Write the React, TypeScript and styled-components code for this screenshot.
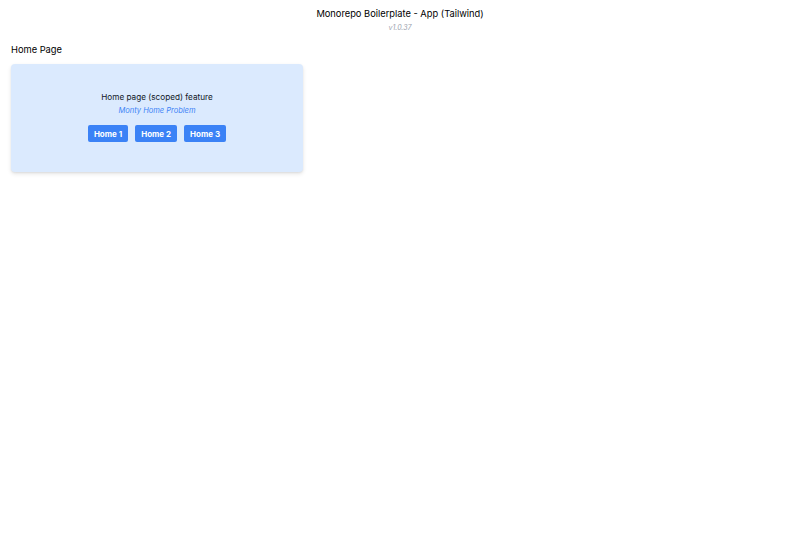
import React from 'react';
import styled, { createGlobalStyle } from 'styled-components';

const GlobalStyle = createGlobalStyle`
  html, body {
    margin: 0;
    padding: 0;
    background: #ffffff;
    font-family: Inter, 'Noto Sans', 'Liberation Sans', sans-serif;
    color: #000000;
  }
`;

const Header = styled.header`
  display: flex;
  flex-direction: column;
  align-items: center;
  padding-top: 7px;
`;

const Title = styled.h1`
  margin: 0;
  font-size: 9.3px;
  font-weight: 400;
  line-height: 14px;
`;

const Version = styled.span`
  margin-top: 2px;
  font-size: 7px;
  font-style: italic;
  color: #9ca3af;
  line-height: 10px;
`;

const Main = styled.main`
  padding: 10px 11px;
`;

const PageTitle = styled.h2`
  margin: 0 0 7px;
  font-size: 9.3px;
  font-weight: 400;
  line-height: 14px;
`;

const Card = styled.section`
  width: 292px;
  height: 108px;
  box-sizing: border-box;
  background: #dbeafe;
  border-radius: 4px;
  box-shadow: 0 2px 4px rgba(0, 0, 0, 0.1), 0 1px 2px rgba(0, 0, 0, 0.06);
  display: flex;
  flex-direction: column;
  align-items: center;
  padding-top: 27px;
`;

const FeatureTitle = styled.p`
  margin: 0;
  font-size: 8.2px;
  line-height: 13px;
  color: #111827;
`;

const Subtitle = styled.p`
  margin: 1px 0 0;
  font-size: 7.5px;
  line-height: 12px;
  font-style: italic;
  color: #3b82f6;
`;

const ButtonRow = styled.div`
  display: flex;
  gap: 7px;
  margin-top: 8px;
`;

const Button = styled.button`
  border: none;
  background: #3b82f6;
  color: #ffffff;
  font-family: inherit;
  font-size: 8px;
  font-weight: 700;
  height: 17px;
  padding: 0 6px;
  border-radius: 2px;
  cursor: pointer;
`;

export default function App() {
  return (
    <>
      <GlobalStyle />
      <Header>
        <Title>Monorepo Boilerplate - App (Tailwind)</Title>
        <Version>v1.0.37</Version>
      </Header>
      <Main>
        <PageTitle>Home Page</PageTitle>
        <Card>
          <FeatureTitle>Home page (scoped) feature</FeatureTitle>
          <Subtitle>Monty Home Problem</Subtitle>
          <ButtonRow>
            <Button>Home 1</Button>
            <Button>Home 2</Button>
            <Button>Home 3</Button>
          </ButtonRow>
        </Card>
      </Main>
    </>
  );
}
